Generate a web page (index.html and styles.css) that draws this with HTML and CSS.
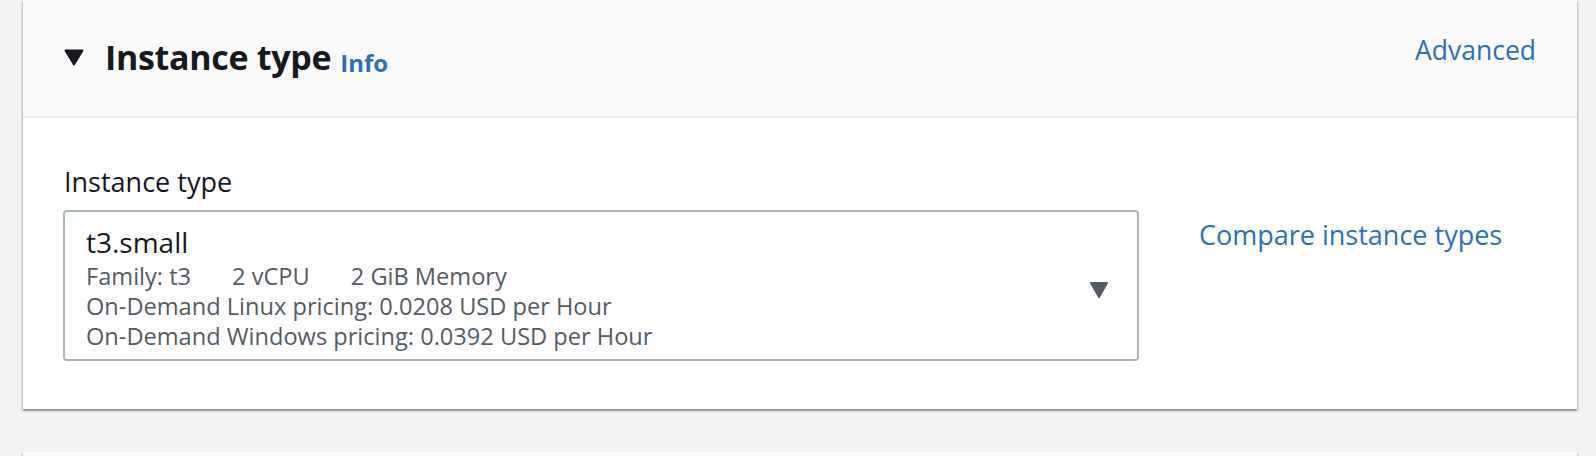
FILE: index.html
```html
<!DOCTYPE html>
<html lang="en">
<head>
<meta charset="utf-8">
<title>Instance type</title>
<link rel="stylesheet" href="styles.css">
</head>
<body>
<div class="page">
  <section class="card">
    <header class="card-header">
      <div class="header-left">
        <svg class="caret" width="20" height="17" viewBox="0 0 20 17" aria-hidden="true"><path d="M1.5 1.5 H18.5 L10 15.5 Z" fill="#16191f" stroke="#16191f" stroke-width="2" stroke-linejoin="round"/></svg>
        <h2 class="title">Instance type</h2>
        <a class="info" href="#">Info</a>
      </div>
      <a class="advanced" href="#">Advanced</a>
    </header>
    <div class="card-body">
      <div class="field">
        <div class="label">Instance type</div>
        <div class="field-row">
          <div class="select">
            <div class="select-text">
              <div class="option-name">t3.small</div>
              <div class="option-tags"><span>Family: t3</span><span>2 vCPU</span><span>2 GiB Memory</span></div>
              <div class="option-desc">On-Demand Linux pricing: 0.0208 USD per Hour</div>
              <div class="option-desc">On-Demand Windows pricing: 0.0392 USD per Hour</div>
            </div>
            <svg class="select-caret" width="20" height="18" viewBox="0 0 20 18" aria-hidden="true"><path d="M2 2 H18 L10 16 Z" fill="#545b64" stroke="#545b64" stroke-width="2" stroke-linejoin="round"/></svg>
          </div>
          <a class="compare" href="#">Compare instance types</a>
        </div>
      </div>
    </div>
  </section>
  <section class="card card-next"></section>
</div>
</body>
</html>
```
FILE: styles.css
```css
html, body {
  margin: 0;
  padding: 0;
  background: #f2f3f3;
  font-family: "Open Sans", "Liberation Sans", Arial, sans-serif;
  color: #16191f;
}
.page {
  height: 456px;
  box-sizing: border-box;
  padding: 0 19px 0 23px;
  display: flex;
  flex-direction: column;
  gap: 43px;
  overflow: hidden;
}
a { text-decoration: none; color: #2b71b6; }
.card {
  background: #fff;
  box-shadow: 0 2px 2px 0 rgba(0, 28, 36, 0.35), 1px 1px 2px 0 rgba(0, 28, 36, 0.15), -1px 1px 2px 0 rgba(0, 28, 36, 0.15);
}
.card-header {
  background: #fafafa;
  height: 116px;
  border-bottom: 2px solid #eaeded;
  box-sizing: content-box;
  display: flex;
  justify-content: space-between;
  align-items: flex-start;
  padding: 0 41px 0 41px;
}
.header-left {
  display: flex;
  align-items: center;
  margin-top: 30px;
  height: 54px;
}
.caret { margin-right: 21px; }
.title {
  margin: 0;
  font-size: 34px;
  font-weight: 700;
  line-height: 54px;
  letter-spacing: -0.3px;
}
.info {
  font-size: 24px;
  font-weight: 700;
  margin-left: 9px;
  margin-top: 10px;
}
.advanced {
  font-size: 26.5px;
  line-height: 36px;
  margin-top: 32px;
}
.card-body {
  padding: 45px 41px 48px 40px;
}
.label {
  font-size: 27px;
  line-height: 38px;
  margin-left: 1px;
  margin-bottom: 9px;
}
.field-row {
  display: flex;
  align-items: flex-start;
  gap: 60px;
}
.select {
  width: 1076px;
  box-sizing: border-box;
  border: 2px solid #aab7b8;
  border-radius: 4px;
  padding: 11px 28px 8px 21px;
  display: flex;
  align-items: center;
  justify-content: space-between;
}
.option-name {
  font-size: 28px;
  line-height: 38px;
}
.option-tags, .option-desc {
  font-size: 23.6px;
  line-height: 30px;
  color: #545b64;
}
.option-tags { display: flex; gap: 41px; }
.select-caret { margin-top: 6px; }
.compare {
  font-size: 27px;
  line-height: 36px;
  margin-top: 7px;
}
.card-next {
  flex: 1 0 auto;
  min-height: 10px;
  background: #fafafa;
}
```
